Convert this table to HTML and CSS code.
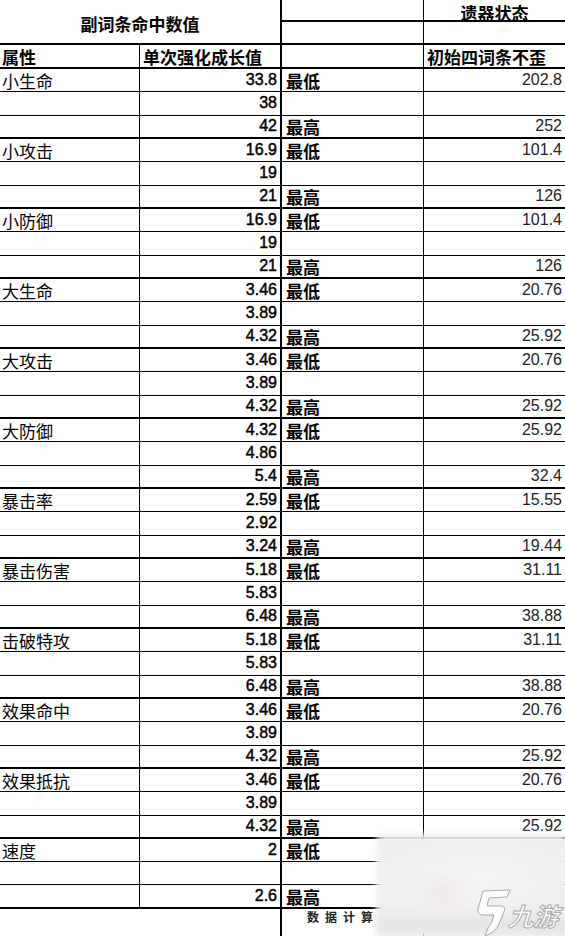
FILE: index.html
```html
<!DOCTYPE html>
<html lang="zh">
<head>
<meta charset="utf-8">
<link rel="stylesheet" href="styles.css">
</head>
<body>
<div class="page">
<div class="sheet">
  <div class="c title">副词条命中数值</div>
  <div class="c tag hb"></div>
  <div class="c val hb center">遗器状态</div>
  <div class="c tag hb"></div>
  <div class="c val hb"></div>
  <div class="c lab hb bold">属性</div>
  <div class="c num hb head">单次强化成长值</div>
  <div class="c tag hb"></div>
  <div class="c val hb head">初始四词条不歪</div>

  <div class="c lab">小生命</div><div class="c num">33.8</div><div class="c tag">最低</div><div class="c val">202.8</div>
  <div class="c lab"></div><div class="c num">38</div><div class="c tag"></div><div class="c val"></div>
  <div class="c lab end"></div><div class="c num end">42</div><div class="c tag end">最高</div><div class="c val end">252</div>

  <div class="c lab">小攻击</div><div class="c num">16.9</div><div class="c tag">最低</div><div class="c val">101.4</div>
  <div class="c lab"></div><div class="c num">19</div><div class="c tag"></div><div class="c val"></div>
  <div class="c lab end"></div><div class="c num end">21</div><div class="c tag end">最高</div><div class="c val end">126</div>

  <div class="c lab">小防御</div><div class="c num">16.9</div><div class="c tag">最低</div><div class="c val">101.4</div>
  <div class="c lab"></div><div class="c num">19</div><div class="c tag"></div><div class="c val"></div>
  <div class="c lab end"></div><div class="c num end">21</div><div class="c tag end">最高</div><div class="c val end">126</div>

  <div class="c lab">大生命</div><div class="c num">3.46</div><div class="c tag">最低</div><div class="c val">20.76</div>
  <div class="c lab"></div><div class="c num">3.89</div><div class="c tag"></div><div class="c val"></div>
  <div class="c lab end"></div><div class="c num end">4.32</div><div class="c tag end">最高</div><div class="c val end">25.92</div>

  <div class="c lab">大攻击</div><div class="c num">3.46</div><div class="c tag">最低</div><div class="c val">20.76</div>
  <div class="c lab"></div><div class="c num">3.89</div><div class="c tag"></div><div class="c val"></div>
  <div class="c lab end"></div><div class="c num end">4.32</div><div class="c tag end">最高</div><div class="c val end">25.92</div>

  <div class="c lab">大防御</div><div class="c num">4.32</div><div class="c tag">最低</div><div class="c val">25.92</div>
  <div class="c lab"></div><div class="c num">4.86</div><div class="c tag"></div><div class="c val"></div>
  <div class="c lab end"></div><div class="c num end">5.4</div><div class="c tag end">最高</div><div class="c val end">32.4</div>

  <div class="c lab">暴击率</div><div class="c num">2.59</div><div class="c tag">最低</div><div class="c val">15.55</div>
  <div class="c lab"></div><div class="c num">2.92</div><div class="c tag"></div><div class="c val"></div>
  <div class="c lab end"></div><div class="c num end">3.24</div><div class="c tag end">最高</div><div class="c val end">19.44</div>

  <div class="c lab">暴击伤害</div><div class="c num">5.18</div><div class="c tag">最低</div><div class="c val">31.11</div>
  <div class="c lab"></div><div class="c num">5.83</div><div class="c tag"></div><div class="c val"></div>
  <div class="c lab end"></div><div class="c num end">6.48</div><div class="c tag end">最高</div><div class="c val end">38.88</div>

  <div class="c lab">击破特攻</div><div class="c num">5.18</div><div class="c tag">最低</div><div class="c val">31.11</div>
  <div class="c lab"></div><div class="c num">5.83</div><div class="c tag"></div><div class="c val"></div>
  <div class="c lab end"></div><div class="c num end">6.48</div><div class="c tag end">最高</div><div class="c val end">38.88</div>

  <div class="c lab">效果命中</div><div class="c num">3.46</div><div class="c tag">最低</div><div class="c val">20.76</div>
  <div class="c lab"></div><div class="c num">3.89</div><div class="c tag"></div><div class="c val"></div>
  <div class="c lab end"></div><div class="c num end">4.32</div><div class="c tag end">最高</div><div class="c val end">25.92</div>

  <div class="c lab">效果抵抗</div><div class="c num">3.46</div><div class="c tag">最低</div><div class="c val">20.76</div>
  <div class="c lab"></div><div class="c num">3.89</div><div class="c tag"></div><div class="c val"></div>
  <div class="c lab end"></div><div class="c num end">4.32</div><div class="c tag end">最高</div><div class="c val end">25.92</div>

  <div class="c lab">速度</div><div class="c num">2</div><div class="c tag">最低</div><div class="c val">12</div>
  <div class="c lab"></div><div class="c num"></div><div class="c tag"></div><div class="c val"></div>
  <div class="c lab end"></div><div class="c num end">2.6</div><div class="c tag end">最高</div><div class="c val end">15.6</div>

  <div class="c foot1"></div>
  <div class="c foot2"></div>
  <div class="c foot3">数据计算</div>
  <div class="c foot4"></div>
</div>

<div class="mark">
  <div class="mark-bg"></div>
  <svg class="mark-logo" width="38" height="48" viewBox="0 0 38 48">
    <path d="M9 2 L36 1 L33 8 L15 9 L13 17 L28 17 Q32 18 30 23 L24 37 Q20 44 11 47 L14 39 Q18 35 20 26 L8 26 Q3 25 4 20 Z" fill="#fdfdfd" stroke="#a9a9a9" stroke-width="1"/>
  </svg>
  <div class="mark-text">九游</div>
</div>
</div>
</body>
</html>
```

FILE: styles.css
```css
html, body {
  margin: 0;
  padding: 0;
  background: #fff;
}
body {
  width: 565px;
  height: 936px;
  overflow: hidden;
}
.page {
  position: relative;
  width: 565px;
  height: 936px;
  overflow: hidden;
}
.sheet {
  display: grid;
  grid-template-columns: 140px 142px 142px 141px;
  grid-template-rows: 22px 23px 24px repeat(36, 23.333px) 27px;
  width: 565px;
  color: #000;
  font-family: "Noto Sans CJK SC", "Liberation Sans", sans-serif;
  font-size: 17px;
}
.c {
  box-sizing: border-box;
  display: flex;
  align-items: center;
  border-bottom: 1px solid #000;
  white-space: nowrap;
  line-height: 20px;
  min-width: 0;
}
.title {
  grid-column: 1 / 3;
  grid-row: 1 / 3;
  justify-content: center;
  border-bottom: 2px solid #000;
  border-right: 2px solid #000;
  font-weight: 700;
  padding-top: 5px;
}
.lab {
  border-right: 1px solid #000;
  padding-left: 2px;
  padding-top: 2px;
}
.num {
  border-right: 2px solid #000;
  justify-content: flex-end;
  padding-right: 3px;
  font-family: "Liberation Sans", sans-serif;
  font-size: 16px;
  font-weight: 400;
  -webkit-text-stroke: 0.45px #000;
}
.tag {
  border-right: 1px solid #000;
  padding-left: 4px;
  padding-top: 2px;
  font-weight: 700;
}
.val {
  justify-content: flex-end;
  padding-right: 3px;
  font-family: "Liberation Sans", sans-serif;
  font-size: 16px;
  color: #222;
}
.hb {
  border-bottom-width: 2px;
}
.end {
  border-bottom-width: 2px;
}
.center {
  justify-content: center;
  align-items: flex-start;
  font-family: "Noto Sans CJK SC", sans-serif;
  font-size: 17px;
  font-weight: 700;
  color: #000;
  padding-right: 0;
  padding-top: 4px;
  line-height: 17px;
}
.bold {
  font-weight: 700;
}
.head {
  justify-content: flex-start;
  font-family: "Noto Sans CJK SC", sans-serif;
  font-size: 17px;
  font-weight: 700;
  color: #000;
  -webkit-text-stroke: 0;
  padding-left: 3px;
  padding-top: 1px;
}
.foot1, .foot4 {
  border-bottom: none;
}
.foot2 {
  border-bottom: none;
  border-right: 2px solid #000;
}
.foot3 {
  border-bottom: none;
  border-right: 1px solid #000;
  padding-left: 25px;
  font-size: 12px;
  font-weight: 700;
  letter-spacing: 6px;
  color: #222;
  align-items: flex-start;
  padding-top: 1px;
  line-height: 14px;
}

.mark {
  position: absolute;
  left: 372px;
  top: 830px;
  width: 200px;
  height: 112px;
}
.mark-bg {
  position: absolute;
  inset: 4px;
  background:
    radial-gradient(ellipse 30px 22px at 68px 58px, rgba(240, 205, 205, 0.3), rgba(240, 205, 205, 0) 100%),
    radial-gradient(ellipse 90px 40px at 100px 45px, #f4f4f4, rgba(244, 244, 244, 0) 100%),
    linear-gradient(180deg, #eeeeee 0%, #efefef 70%, #e4e4e4 88%, #ececec 100%);
  filter: blur(3px);
  border-radius: 6px;
}
.mark-logo {
  position: absolute;
  left: 102px;
  top: 59px;
}
.mark-text {
  position: absolute;
  left: 139px;
  top: 73px;
  font-family: "Noto Sans CJK SC", sans-serif;
  font-size: 25px;
  font-weight: 700;
  line-height: 1;
  color: #fdfdfd;
  -webkit-text-stroke: 1px #a9a9a9;
  transform: skewX(-16deg);
  white-space: nowrap;
}
```
